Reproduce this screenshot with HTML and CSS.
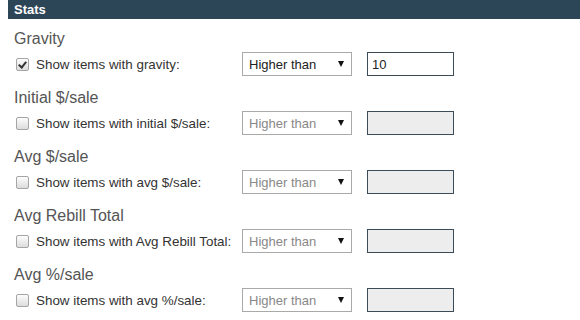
FILE: index.html
```html
<!DOCTYPE html>
<html lang="en">
<head>
<meta charset="UTF-8" />
<title>Stats</title>
<link rel="stylesheet" href="styles.css">
</head>
<body>

<div class="panel">
  <h2 class="panel-title">Stats</h2>

  <div class="filter">
    <h3>Gravity</h3>
    <div class="filter-row">
      <label class="check"><input type="checkbox" checked /> Show items with gravity:</label>
      <span class="select-wrap"><select><option>Higher than</option><option>Lower than</option></select></span>
      <input type="text" class="value" value="10" />
    </div>
  </div>

  <div class="filter">
    <h3>Initial $/sale</h3>
    <div class="filter-row">
      <label class="check"><input type="checkbox" /> Show items with initial $/sale:</label>
      <span class="select-wrap"><select disabled><option>Higher than</option></select></span>
      <input type="text" class="value" disabled />
    </div>
  </div>

  <div class="filter">
    <h3>Avg $/sale</h3>
    <div class="filter-row">
      <label class="check"><input type="checkbox" /> Show items with avg $/sale:</label>
      <span class="select-wrap"><select disabled><option>Higher than</option></select></span>
      <input type="text" class="value" disabled />
    </div>
  </div>

  <div class="filter">
    <h3>Avg Rebill Total</h3>
    <div class="filter-row">
      <label class="check"><input type="checkbox" /> Show items with Avg Rebill Total:</label>
      <span class="select-wrap"><select disabled><option>Higher than</option></select></span>
      <input type="text" class="value" disabled />
    </div>
  </div>

  <div class="filter">
    <h3>Avg %/sale</h3>
    <div class="filter-row">
      <label class="check"><input type="checkbox" /> Show items with avg %/sale:</label>
      <span class="select-wrap"><select disabled><option>Higher than</option></select></span>
      <input type="text" class="value" disabled />
    </div>
  </div>
</div>

</body>
</html>
```

FILE: styles.css
```css
* {
  box-sizing: border-box;
}

body {
  margin: 0;
  font-family: "Liberation Sans", Arial, sans-serif;
  font-size: 13px;
  color: #333;
  background: #fff;
}

.panel {
  padding-left: 8px;
}

.panel-title {
  margin: 0;
  height: 19px;
  line-height: 19px;
  padding-left: 6px;
  background: #2d4657;
  color: #fff;
  font-size: 13px;
  font-weight: bold;
}

.filter {
  padding: 10px 0 0 6px;
}

.filter + .filter {
  padding-top: 12px;
}

.filter h3 {
  margin: 0 0 3px;
  font-size: 16px;
  font-weight: normal;
  line-height: 20px;
  color: #555;
}

.filter-row {
  display: flex;
  align-items: center;
  height: 24px;
}

.check {
  display: flex;
  align-items: center;
  width: 228px;
  padding-left: 2px;
  font-size: 13.4px;
  white-space: nowrap;
}

.check input {
  appearance: none;
  position: relative;
  width: 13px;
  height: 13px;
  margin: 0 7px 0 0;
  border: 1px solid #a5a5a5;
  border-radius: 2px;
  background: linear-gradient(#fdfdfd, #dcdcdc);
}

.check input:checked::after {
  content: "";
  position: absolute;
  left: 3px;
  top: 1px;
  width: 3px;
  height: 6px;
  border: solid #333;
  border-width: 0 2px 2px 0;
  transform: rotate(40deg);
}

.select-wrap {
  position: relative;
  display: inline-block;
}

.select-wrap::after {
  content: "";
  position: absolute;
  right: 8px;
  top: 9px;
  border-left: 3px solid transparent;
  border-right: 3px solid transparent;
  border-top: 6px solid #111;
  pointer-events: none;
}

select {
  appearance: none;
  width: 110px;
  height: 24px;
  padding: 0 0 0 6px;
  border: 1px solid #a9a9a9;
  border-radius: 0;
  background: #fff;
  font: inherit;
  color: #222;
}

select:disabled {
  color: #888;
  opacity: 1;
}

.value {
  width: 87px;
  height: 24px;
  margin-left: 15px;
  padding: 0 4px;
  border: 1px solid #3b4b57;
  border-radius: 0;
  font: inherit;
  color: #222;
  background: #fff;
}

.value:disabled {
  background: #ededed;
}
```
